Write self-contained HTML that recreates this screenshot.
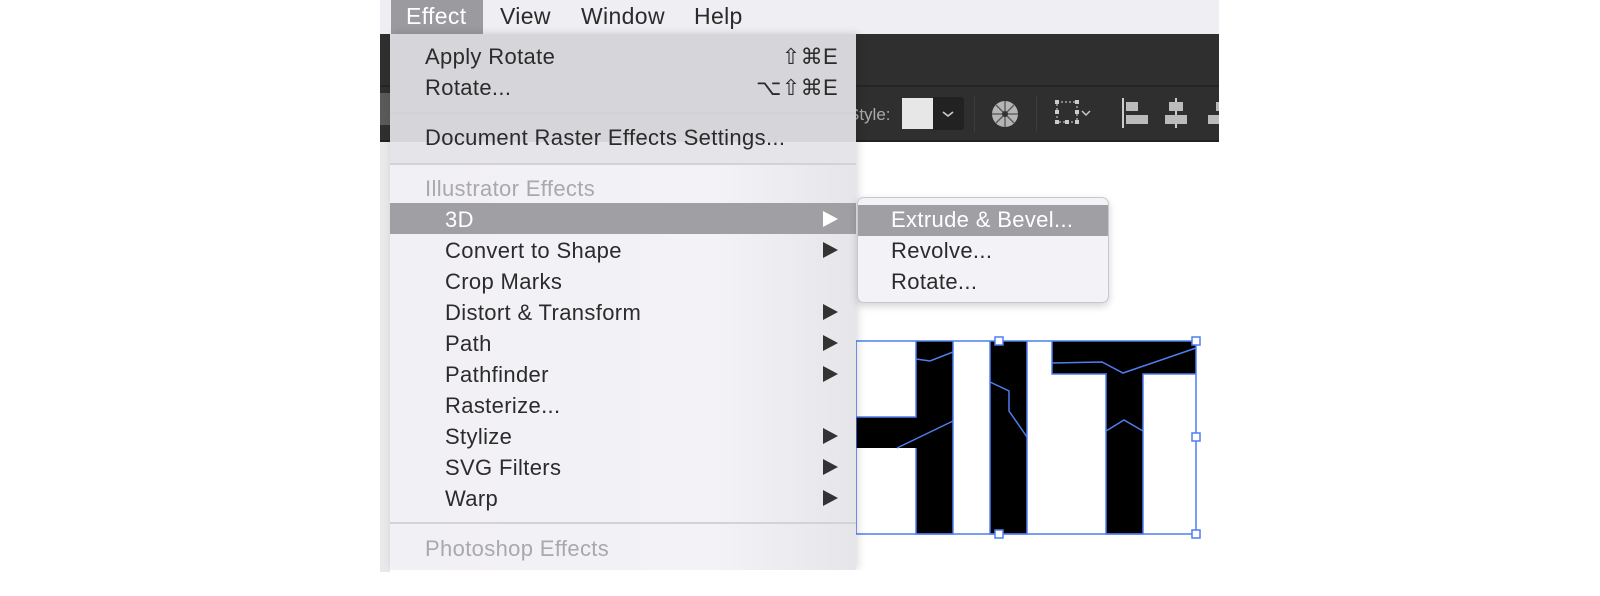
<!DOCTYPE html>
<html><head><meta charset="utf-8"><style>
*{margin:0;padding:0;box-sizing:border-box}
body{width:1600px;height:596px;background:#fff;position:relative;overflow:hidden;font-family:"Liberation Sans","DejaVu Sans",sans-serif}
.a{position:absolute}
.t{position:absolute;font-size:22px;letter-spacing:0.35px;color:#2b2b2b;line-height:31px;white-space:nowrap}
.d{color:#a9a8ad}
.w{color:#fff}
.ar{position:absolute;left:823px;width:0;height:0;border-top:8px solid transparent;border-bottom:8px solid transparent;border-left:15px solid #333}
.sep{position:absolute;left:390px;width:466px;height:2px;background:#d3d2d6}
</style></head><body>
<!-- menubar -->
<div class="a" style="left:380px;top:0;width:839px;height:34px;background:#efeef3"></div>
<div class="a" style="left:391px;top:0;width:92px;height:34px;background:#9b9a9f"></div>
<div class="t w" style="left:406px;top:1px;font-size:23px">Effect</div>
<div class="t" style="left:500px;top:1px;font-size:23px">View</div>
<div class="t" style="left:581px;top:1px;font-size:23px">Window</div>
<div class="t" style="left:694px;top:1px;font-size:23px">Help</div>
<!-- toolbar -->
<div class="a" style="left:380px;top:34px;width:839px;height:108px;background:#2f2f2f"></div>
<div class="a" style="left:380px;top:85px;width:839px;height:2px;background:#252525"></div>
<div class="a" style="left:380px;top:140px;width:839px;height:2px;background:#222"></div>
<div class="a" style="left:380px;top:93px;width:10px;height:32px;background:#5a5a5a"></div>
<div class="a" style="left:380px;top:142px;width:10px;height:430px;background:#e9e9ea"></div>
<div class="t" style="left:848px;top:99px;font-size:17px;color:#aaa;letter-spacing:0">Style:</div>
<div class="a" style="left:902px;top:98px;width:31px;height:31px;background:#e7e7e7"></div>
<div class="a" style="left:933px;top:97px;width:31px;height:33px;background:#222;border-radius:0 3px 3px 0"></div>
<svg class="a" style="left:940px;top:106px" width="16" height="16"><path d="M3 6l5 4 5-4" fill="none" stroke="#ccc" stroke-width="1.6"/></svg>
<div class="a" style="left:974px;top:96px;width:1px;height:36px;background:#3d3d3d"></div>
<svg class="a" style="left:990px;top:99px" width="30" height="30"><circle cx="15" cy="15" r="13" fill="#b5b5b5"/><g stroke="#555" stroke-width="1.3"><path d="M15 2v26M2 15h26M6 6l18 18M24 6L6 24"/></g><circle cx="15" cy="15" r="3" fill="#333"/></svg>
<div class="a" style="left:1036px;top:96px;width:1px;height:36px;background:#3d3d3d"></div>
<svg class="a" style="left:1055px;top:100px" width="46" height="26"><rect x="2" y="2" width="20" height="20" fill="none" stroke="#bbb" stroke-width="1.2" stroke-dasharray="2 2"/><g fill="#ccc"><rect x="0" y="0" width="4" height="4"/><rect x="20" y="0" width="4" height="4"/><rect x="0" y="20" width="4" height="4"/><rect x="20" y="20" width="4" height="4"/><rect x="10" y="20" width="4" height="4"/><rect x="0" y="10" width="4" height="4"/><rect x="20" y="10" width="4" height="4"/></g><path d="M27 11l4 4 4-4" fill="none" stroke="#ccc" stroke-width="1.4"/></svg>
<svg class="a" style="left:1122px;top:98px" width="28" height="30"><rect x="0" y="0" width="2" height="30" fill="#ccc"/><rect x="4" y="4" width="12" height="9" fill="#bbb"/><rect x="4" y="17" width="22" height="9" fill="#bbb"/></svg>
<svg class="a" style="left:1164px;top:98px" width="24" height="30"><rect x="11" y="0" width="2" height="30" fill="#ccc"/><rect x="5" y="4" width="14" height="9" fill="#bbb"/><rect x="1" y="17" width="22" height="9" fill="#bbb"/></svg>
<svg class="a" style="left:1208px;top:98px" width="11" height="30"><rect x="8" y="4" width="3" height="9" fill="#bbb"/><rect x="0" y="17" width="11" height="9" fill="#bbb"/></svg>
<!-- artwork -->
<svg class="a" style="left:0;top:0" width="1600" height="596">
<g fill="#000"><rect x="856" y="417" width="60" height="31"/><rect x="916" y="341" width="37" height="193"/><rect x="990" y="341" width="37" height="193"/><rect x="1052" y="341" width="144" height="33"/><rect x="1106" y="374" width="37" height="160"/></g>
<g fill="none" stroke="#4f7ef0" stroke-width="1.5">
<rect x="856" y="341" width="340" height="193"/>
<path d="M916 341v76h-60M916 448v86h37V341M990 341v193h37V341M1052 341v33h54v160h37V374h53"/>
<path d="M916 359l14 2 23-9M897 448l56-27M990 382l19 9v20l18 26M1052 363l50-1 21 11 73-25M1106 431l18-11 19 11"/>
</g>
<g fill="#fff" stroke="#4f7ef0" stroke-width="1.5"><rect x="995" y="337" width="8" height="8"/><rect x="1192" y="337" width="8" height="8"/><rect x="1192" y="433" width="8" height="8"/><rect x="995" y="530" width="8" height="8"/><rect x="1192" y="530" width="8" height="8"/></g>
</svg>
<!-- main menu -->
<div class="a" style="left:390px;top:34px;width:466px;height:536px;background:linear-gradient(90deg,#f1f0f4 0%,#f3f2f6 70%,#e6e5e9 100%);box-shadow:2px 0 8px rgba(0,0,0,.15)"></div>
<div class="a" style="left:390px;top:34px;width:466px;height:108px;background:#d6d5d9"></div>
<div class="a" style="left:390px;top:142px;width:466px;height:22px;background:#e5e4e8"></div>
<div class="t" style="left:425px;top:41px">Apply Rotate</div>
<div class="t" style="left:760px;top:41px;width:78px;text-align:right">⇧⌘E</div>
<div class="t" style="left:740px;top:72px">&nbsp;</div>
<div class="t" style="left:425px;top:72px">Rotate...</div>
<div class="t" style="left:740px;top:72px;width:98px;text-align:right">⌥⇧⌘E</div>
<div class="sep" style="top:112px"></div>
<div class="t" style="left:425px;top:122px">Document Raster Effects Settings...</div>
<div class="sep" style="top:163px"></div>
<div class="t d" style="left:425px;top:173px">Illustrator Effects</div>
<div class="a" style="left:390px;top:203px;width:466px;height:31px;background:#a09fa4"></div>
<div class="t w" style="left:445px;top:204px">3D</div>
<div class="ar" style="top:211px;border-left-color:#fff"></div>
<div class="t" style="left:445px;top:235px">Convert to Shape</div><div class="ar" style="top:242px"></div>
<div class="t" style="left:445px;top:266px">Crop Marks</div>
<div class="t" style="left:445px;top:297px">Distort &amp; Transform</div><div class="ar" style="top:304px"></div>
<div class="t" style="left:445px;top:328px">Path</div><div class="ar" style="top:335px"></div>
<div class="t" style="left:445px;top:359px">Pathfinder</div><div class="ar" style="top:366px"></div>
<div class="t" style="left:445px;top:390px">Rasterize...</div>
<div class="t" style="left:445px;top:421px">Stylize</div><div class="ar" style="top:428px"></div>
<div class="t" style="left:445px;top:452px">SVG Filters</div><div class="ar" style="top:459px"></div>
<div class="t" style="left:445px;top:483px">Warp</div><div class="ar" style="top:490px"></div>
<div class="sep" style="top:522px"></div>
<div class="t d" style="left:425px;top:533px">Photoshop Effects</div>
<div class="a" style="left:390px;top:570px;width:480px;height:26px;background:#fff"></div>
<!-- submenu -->
<div class="a" style="left:857px;top:197px;width:252px;height:106px;background:#f3f2f6;border:1px solid #c9c8cc;border-radius:7px;box-shadow:0 3px 8px rgba(0,0,0,.18);overflow:hidden">
<div class="a" style="left:0;top:7px;width:252px;height:31px;background:#a09fa4"></div>
</div>
<div class="t w" style="left:891px;top:204px">Extrude &amp; Bevel...</div>
<div class="t" style="left:891px;top:235px">Revolve...</div>
<div class="t" style="left:891px;top:266px">Rotate...</div>
</body></html>
